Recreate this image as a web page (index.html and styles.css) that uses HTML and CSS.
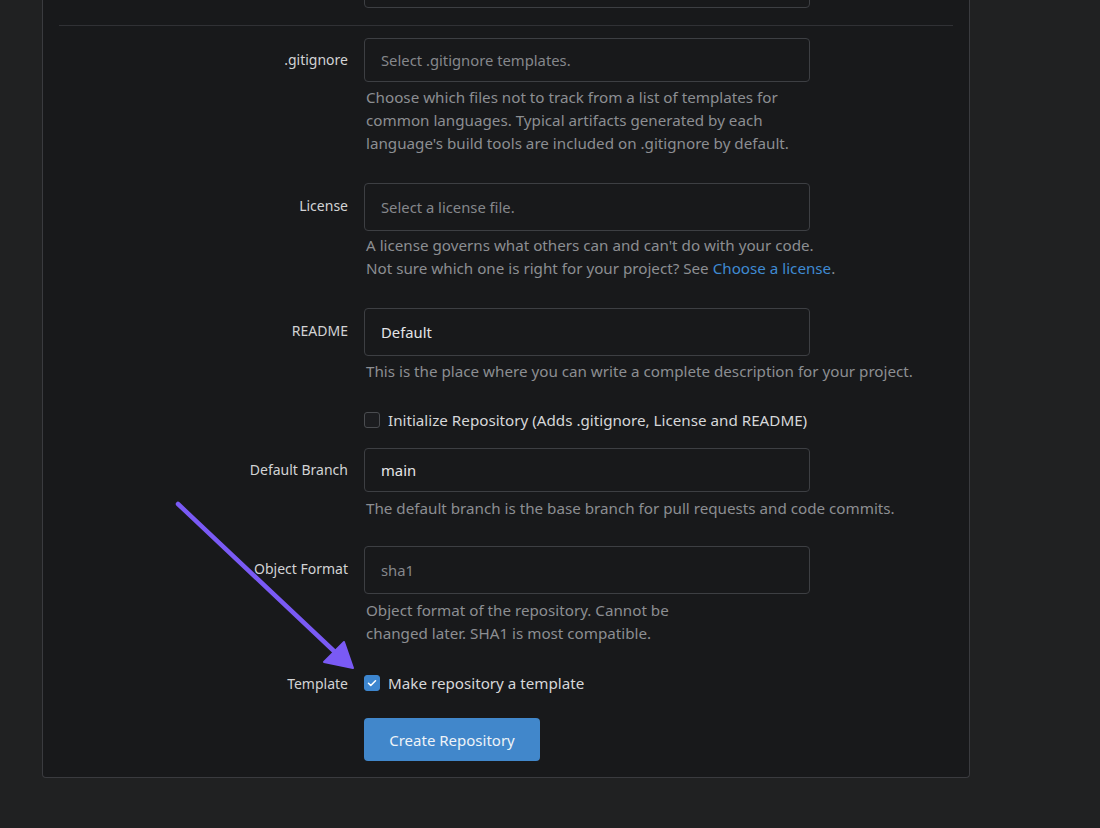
FILE: index.html
```html
<!DOCTYPE html>
<html lang="en">
<head>
<meta charset="utf-8">
<title>New Repository</title>
<link rel="stylesheet" href="styles.css">
</head>
<body>
<div class="page">
  <form class="segment">
    <div class="field first-field">
      <label class="label h44"></label>
      <div class="control">
        <div class="input h44"></div>
      </div>
    </div>

    <div class="divider"></div>

    <div class="field">
      <label class="label h44">.gitignore</label>
      <div class="control">
        <div class="input h44 placeholder">Select .gitignore templates.</div>
        <p class="help narrow">Choose which files not to track from a list of templates for common languages. Typical artifacts generated by each language's build tools are included on .gitignore by default.</p>
      </div>
    </div>

    <div class="field">
      <label class="label h48">License</label>
      <div class="control">
        <div class="input h48 placeholder">Select a license file.</div>
        <p class="help help-tight">A license governs what others can and can't do with your code.<br>Not sure which one is right for your project? See <a class="link" href="#">Choose a license</a>.</p>
      </div>
    </div>

    <div class="field readme-field">
      <label class="label h48">README</label>
      <div class="control">
        <div class="input h48">Default</div>
        <p class="help">This is the place where you can write a complete description for your project.</p>
      </div>
    </div>

    <div class="field check-field init-field">
      <label class="label"></label>
      <div class="control check-row">
        <span class="checkbox"></span>
        <span class="check-text">Initialize Repository (Adds .gitignore, License and README)</span>
      </div>
    </div>

    <div class="field branch-field">
      <label class="label h44">Default Branch</label>
      <div class="control">
        <div class="input h44">main</div>
        <p class="help help-loose">The default branch is the base branch for pull requests and code commits.</p>
      </div>
    </div>

    <div class="field format-field">
      <label class="label h48">Object Format</label>
      <div class="control">
        <div class="input h48 placeholder">sha1</div>
        <p class="help help-loose short">Object format of the repository. Cannot be changed later. SHA1 is most compatible.</p>
      </div>
    </div>

    <div class="field check-field template-field">
      <label class="label">Template</label>
      <div class="control check-row">
        <span class="checkbox checked">
          <svg viewBox="0 0 16 16" width="16" height="16"><path d="M4 8.3l2.6 2.6L12 5.4" fill="none" stroke="#fff" stroke-width="1.8" stroke-linecap="round" stroke-linejoin="round"/></svg>
        </span>
        <span class="check-text">Make repository a template</span>
      </div>
    </div>

    <div class="field submit-field">
      <label class="label"></label>
      <div class="control">
        <button class="button" type="button">Create Repository</button>
      </div>
    </div>
  </form>

  <svg class="arrow" width="1100" height="828" viewBox="0 0 1100 828">
    <line x1="178" y1="504" x2="336" y2="653" stroke="#7a5af5" stroke-width="4.5" stroke-linecap="round"/>
    <polygon points="353,668 324,662 344,642" fill="#7a5af5" stroke="#7a5af5" stroke-width="2" stroke-linejoin="round"/>
  </svg>
</div>
</body>
</html>
```

FILE: styles.css
```css
* { box-sizing: border-box; }

html, body {
  margin: 0;
  padding: 0;
  background: #202122;
  height: 100%;
  overflow: hidden;
}

body {
  font-family: "Noto Sans", "Open Sans", sans-serif;
  color: #d2d3d5;
}

.page {
  position: relative;
  padding-left: 42px;
  margin-top: -60px;
}

.segment {
  width: 928px;
  background: #18191b;
  border: 1px solid #3a3b3f;
  border-top: none;
  border-radius: 0 0 4px 4px;
  padding: 24px 16px 16px;
}

.field {
  display: flex;
  align-items: flex-start;
  gap: 16px;
  margin-bottom: 28px;
}

.first-field { margin-bottom: 0; }
.readme-field { margin-bottom: 26px; }
.format-field { margin-bottom: 27px; }

.label {
  width: 289px;
  flex: none;
  text-align: right;
  font-size: 14px;
  color: #d2d3d5;
  display: flex;
  align-items: center;
  justify-content: flex-end;
}

.label.h44 { height: 42px; }
.label.h48 { height: 45px; }

.control {
  display: flex;
  flex-direction: column;
  width: 446px;
}

.input {
  width: 446px;
  border: 1px solid #3d3f43;
  border-radius: 4px;
  background: #18191b;
  color: #e4e5e7;
  font-size: 14.8px;
  padding: 0 16px;
  display: flex;
  align-items: center;
}

.input.h44 { height: 44px; }
.input.h48 { height: 48px; }

.input.placeholder { color: #85878b; }

.help {
  margin: 4px 0 0 2px;
  font-size: 15.2px;
  line-height: 23px;
  color: #8c8e92;
  white-space: nowrap;
}

.help.narrow { white-space: normal; width: 430px; }
.help.short { white-space: normal; width: 345px; }
.help-tight { margin-top: 3px; }
.help-loose { margin-top: 5px; }

.link { color: #3f8ad2; text-decoration: none; }

.divider {
  height: 1px;
  background: #303135;
  margin: 17px 0 12px;
}

.check-field { height: 22px; align-items: center; }
.init-field { margin-bottom: 17px; }
.template-field { margin-bottom: 24px; }
.branch-field { margin-bottom: 26px; }

.check-row {
  flex-direction: row;
  align-items: center;
  gap: 8px;
  height: 22px;
}

.checkbox {
  width: 16px;
  height: 16px;
  border: 1px solid #4a4c50;
  border-radius: 3px;
  background: #1c1d20;
  flex: none;
  display: flex;
  align-items: center;
  justify-content: center;
}

.checkbox.checked {
  background: #3d86cf;
  border-color: #3d86cf;
}

.checkbox svg { display: block; }

.check-text {
  font-size: 15.2px;
  color: #d6d7d9;
  white-space: nowrap;
}

.template-field .label { height: 22px; }

.submit-field { margin-bottom: 0; }

.button {
  width: 176px;
  height: 43px;
  border: none;
  border-radius: 4px;
  background: #4187cb;
  color: #eef3f8;
  font-family: inherit;
  font-size: 15px;
  padding: 0;
}

.arrow {
  position: absolute;
  left: 0;
  top: 60px;
  pointer-events: none;
}
```
